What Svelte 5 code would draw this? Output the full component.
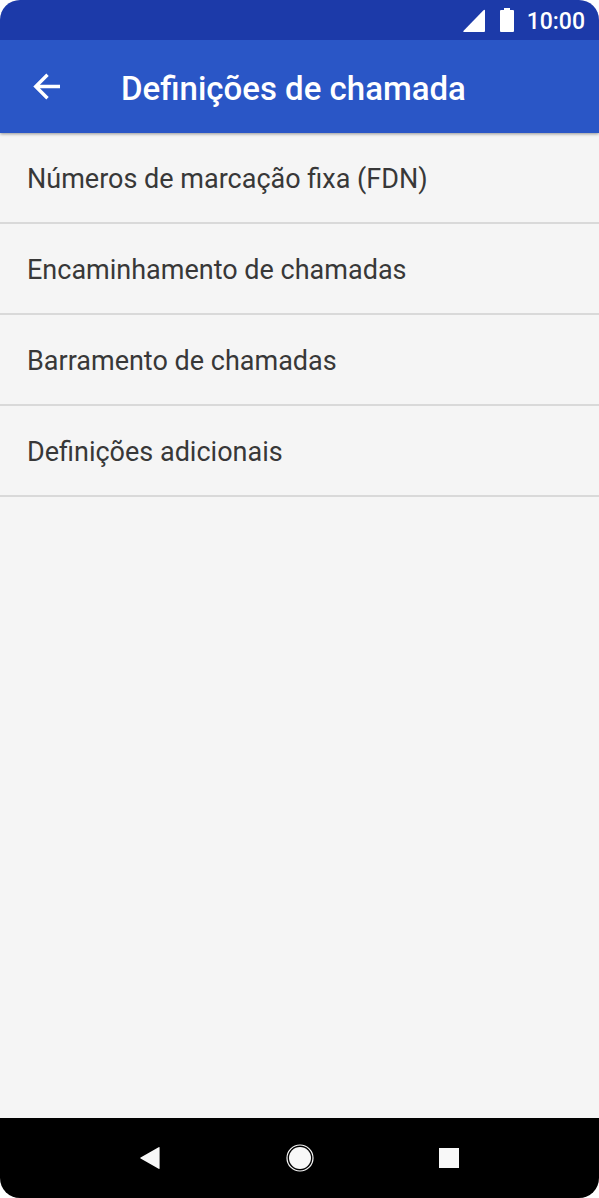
<script>
  const items = [
    'Números de marcação fixa (FDN)',
    'Encaminhamento de chamadas',
    'Barramento de chamadas',
    'Definições adicionais'
  ];
</script>

<div class="screen">
  <div class="status">
    <svg class="signal" viewBox="0 0 22 24" aria-hidden="true"><path d="M20.5 2.3q1.5-1.2 1.5.4V23q0 1-1 1H1q-1.4 0-.4-1.2z" /></svg>
    <svg class="battery" viewBox="0 0 14 24" aria-hidden="true"><path d="M4 0h6v2h3q1 0 1 1v20q0 1-1 1H1q-1 0-1-1V3q0-1 1-1h3z" /></svg>
    <span>10:00</span>
  </div>
  <header>
    <button class="back" aria-label="Voltar">
      <svg viewBox="0 0 28 28" aria-hidden="true"><path d="M27 13.5H3M14.5 1.8L2.7 13.5l11.8 11.7" /></svg>
    </button>
    <h1>Definições de chamada</h1>
  </header>
  <main>
    <ul>
      {#each items as item}
        <li><button>{item}</button></li>
      {/each}
    </ul>
  </main>
  <nav>
    <button aria-label="Anterior"><svg viewBox="0 0 28 28" aria-hidden="true"><path d="M22.6 3.2q1-.6 1 .5v20.6q0 1.1-1 .5L4.6 14.6q-1-.6 0-1.2z" /></svg></button>
    <button aria-label="Início"><svg viewBox="0 0 28 28" aria-hidden="true"><circle cx="14" cy="14" r="11" /><circle class="ring" cx="14" cy="14" r="13" /></svg></button>
    <button aria-label="Recentes"><svg viewBox="0 0 28 28" aria-hidden="true"><path d="M4 4h20v20H4z" /></svg></button>
  </nav>
</div>

<style>
  :global(body) { margin: 0; background: #fff; }
  .screen {
    display: flex;
    flex-direction: column;
    min-height: 100vh;
    border-radius: 20px;
    overflow: hidden;
    background: #f5f5f5;
    color: #383838;
    font-family: Roboto, sans-serif;
  }
  button { border: 0; padding: 0; background: none; color: inherit; font: inherit; cursor: pointer; }
  svg { display: block; fill: #fff; }
  .status {
    display: flex;
    align-items: center;
    justify-content: flex-end;
    height: 40px;
    padding-right: 14px;
    background: #1c3aa9;
    color: #fff;
    font-size: 23px;
    font-weight: 500;
  }
  .status span { padding-top: 2px; }
  .signal { width: 22px; height: 24px; margin-right: 15px; }
  .battery { width: 14px; height: 24px; margin-right: 13px; }
  header {
    display: flex;
    align-items: center;
    gap: 60px;
    height: 93px;
    padding-left: 33px;
    background: #2a56c6;
    color: #fff;
    z-index: 1;
    box-shadow: 0 1px 3px rgba(0, 0, 0, 0.4);
  }
  .status { z-index: 2; }
  .back svg { width: 28px; height: 28px; fill: none; stroke: #fff; stroke-width: 3.4; }
  h1 { margin: 0; padding-top: 3px; font-size: 33px; font-weight: 500; }
  main { flex: 1; }
  ul { margin: 0; padding: 0; list-style: none; }
  li { border-bottom: 2px solid #d9d9d9; }
  li button { display: block; width: 100%; height: 89px; padding: 2px 27px 0; text-align: left; font-size: 27px; }
  nav {
    display: grid;
    grid-template-columns: repeat(3, 25%);
    justify-content: center;
    justify-items: center;
    align-items: center;
    height: 80px;
    background: #000;
  }
  nav svg { width: 28px; height: 28px; fill: #f8f8f8; }
  nav svg .ring { fill: none; stroke: #f8f8f8; stroke-width: 1.2; }
</style>
